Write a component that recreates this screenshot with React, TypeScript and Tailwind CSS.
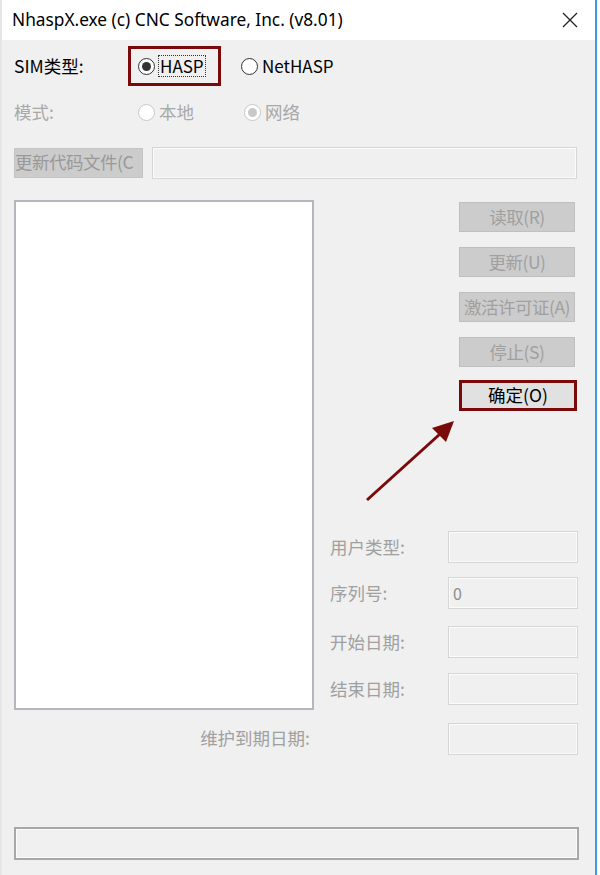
import React from "react";

const CJK = "font-['Microsoft_YaHei','Noto_Sans_CJK_SC',sans-serif]";

function Radio({ checked, disabled }: { checked?: boolean; disabled?: boolean }) {
  return (
    <span
      className={`flex h-[17px] w-[17px] shrink-0 items-center justify-center rounded-full border bg-white ${
        disabled ? "border-[#c8c8c8]" : "border-[#333333]"
      }`}
    >
      {checked && (
        <span className={`block h-[9px] w-[9px] rounded-full ${disabled ? "bg-[#c8c8c8]" : "bg-[#333333]"}`} />
      )}
    </span>
  );
}

function DisabledButton({ label }: { label: string }) {
  return (
    <div className="flex h-[30px] w-[116px] items-center justify-center whitespace-nowrap border border-[#bfbfbf] bg-[#cccccc] text-[17.5px] tracking-[-0.5px] text-[#a0a0a0]">
      {label}
    </div>
  );
}

function Field({ value }: { value?: string }) {
  return (
    <div className="flex h-[32px] w-[130px] items-center border border-[#d6d6d6] bg-[#f0f0f0] px-[4px] text-[16px] text-[#8c8c8c] shadow-[inset_0_0_0_1px_#fbfbfb]">
      {value}
    </div>
  );
}

function FieldRow({ label, value, className }: { label: string; value?: string; className?: string }) {
  return (
    <div className={`flex h-[32px] items-center ${className ?? ""}`}>
      <span className="w-[118px] text-[17.5px] text-[#a0a0a0]">{label}</span>
      <Field value={value} />
    </div>
  );
}

export default function App() {
  return (
    <div className={`relative flex h-[875px] w-[600px] bg-white ${CJK}`}>
      <div className="flex w-[595px] flex-col border-l-2 border-[#e6e6e6]">
        {/* Title bar */}
        <div className="flex h-[40px] shrink-0 items-center justify-between bg-white pl-[10px] pr-[17px]">
          <span className="font-['Noto_Sans',sans-serif] text-[17.3px] text-black">
            NhaspX.exe (c) CNC Software, Inc. (v8.01)
          </span>
          <svg width="16" height="16" viewBox="0 0 16 16">
            <path d="M1 1 L15 15 M15 1 L1 15" stroke="#222" strokeWidth="1.3" fill="none" />
          </svg>
        </div>

        {/* Body */}
        <div className="flex flex-1 flex-col bg-[#f0f0f0] pl-[12px]">
          {/* SIM type */}
          <div className="mt-[6px] flex h-[40px] items-center">
            <span className="w-[114px] text-[17.5px] text-black">SIM类型:</span>
            <div className="flex h-[40px] w-[93px] items-center border-[3px] border-[#7a0a0a] pl-[7px]">
              <Radio checked />
              <span className="ml-[3px] border border-dotted border-[#333] px-[1px] leading-[20px] text-[17px] text-black">
                HASP
              </span>
            </div>
            <div className="ml-[20px] flex items-center">
              <Radio />
              <span className="ml-[4px] text-[17px] text-black">NetHASP</span>
            </div>
          </div>

          {/* Mode */}
          <div className="mt-[14px] flex h-[24px] items-center">
            <span className="w-[124px] text-[17.5px] text-[#a8a8a8]">模式:</span>
            <Radio disabled />
            <span className="ml-[4px] w-[85px] text-[17.5px] text-[#a8a8a8]">本地</span>
            <Radio checked disabled />
            <span className="ml-[4px] text-[17.5px] text-[#a8a8a8]">网络</span>
          </div>

          {/* Update code file */}
          <div className="mt-[23px] flex h-[31px] items-center gap-[9px]">
            <div className="flex h-[30px] w-[129px] items-center overflow-hidden whitespace-nowrap border border-[#c4c4c4] bg-[#cccccc] text-[17.5px] tracking-[-0.5px] text-[#999999]">
              更新代码文件(C
            </div>
            <div className="h-[32px] w-[425px] border border-[#d6d6d6] bg-[#f0f0f0] shadow-[inset_0_0_0_1px_#fbfbfb]" />
          </div>

          {/* Main area */}
          <div className="mt-[22px] flex">
            <div className="h-[510px] w-[300px] border-2 border-[#b6b6be] bg-white" />
            <div className="flex flex-1 flex-col pl-[16px]">
              <div className="flex flex-col items-end gap-[15px] pr-[20px] pt-[2px]">
                <DisabledButton label="读取(R)" />
                <DisabledButton label="更新(U)" />
                <DisabledButton label="激活许可证(A)" />
                <DisabledButton label="停止(S)" />
              </div>
              <div className="mt-[13px] flex justify-end pr-[18px]">
                <div className="flex h-[31px] w-[118px] items-center justify-center border-[3px] border-[#7a0a0a] bg-[#e1e1e1] text-[17.5px] text-black">
                  确定(O)
                </div>
              </div>
              <div className="mt-[120px] flex flex-col">
                <FieldRow label="用户类型:" />
                <FieldRow label="序列号:" value="0" className="mt-[14px]" />
                <FieldRow label="开始日期:" className="mt-[17px]" />
                <FieldRow label="结束日期:" className="mt-[15px]" />
              </div>
            </div>
          </div>

          {/* Maintenance date */}
          <div className="mt-[12px] flex h-[33px] items-center">
            <span className="w-[296px] text-right text-[17.5px] text-[#a0a0a0]">维护到期日期:</span>
            <div className="ml-[138px]">
              <Field />
            </div>
          </div>

          {/* Status bar */}
          <div className="mt-[72px] h-[33px] w-[565px] border-2 border-[#a8a8a8] bg-[#f0f0f0] shadow-[inset_0_0_0_1px_#fbfbfb]" />
        </div>
      </div>
      <div className="w-[2px] bg-[#3c9be8]" />
      <div className="flex-1 bg-white" />

      {/* Arrow annotation */}
      <svg className="pointer-events-none absolute left-0 top-0" width="600" height="875">
        <line x1="367" y1="500" x2="440" y2="434" stroke="#7a0a0a" strokeWidth="3" />
        <polygon points="454,421 432,428 446,442" fill="#7a0a0a" />
      </svg>
    </div>
  );
}
